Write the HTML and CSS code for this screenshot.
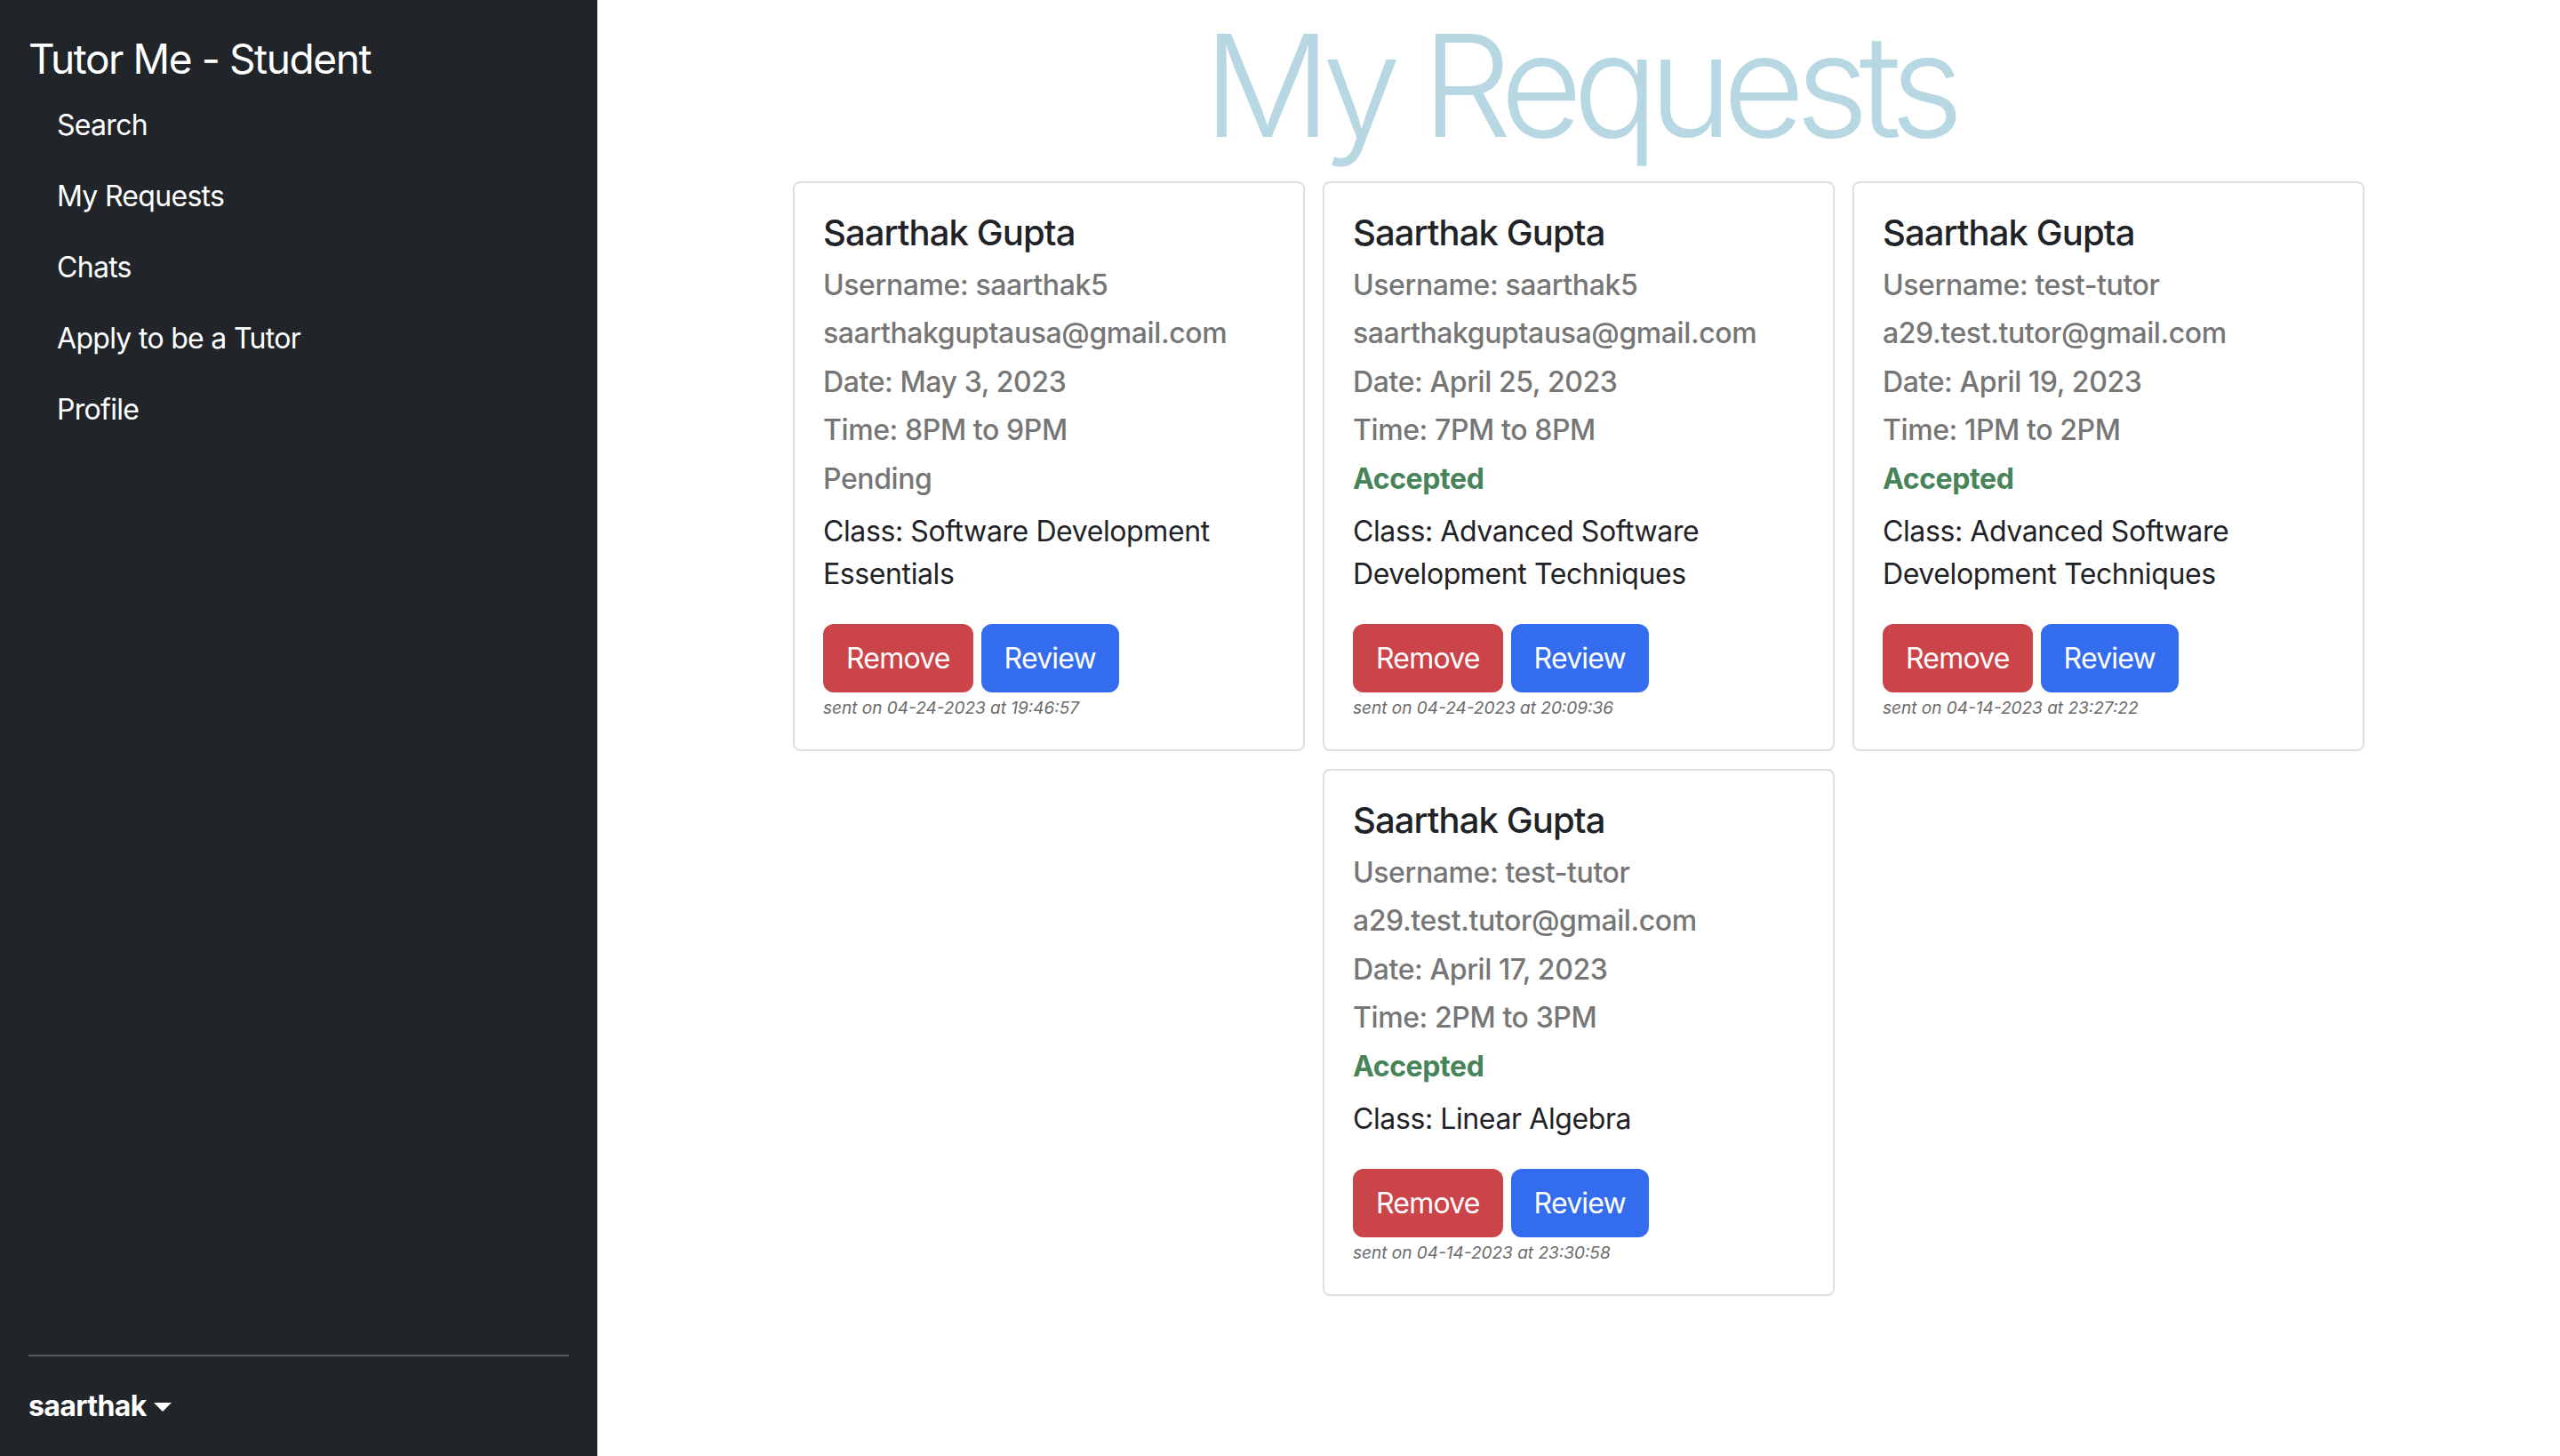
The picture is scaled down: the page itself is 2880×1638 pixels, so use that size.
FILE: index.html
```html
<!DOCTYPE html>
<html lang="en">
<head>
<meta charset="utf-8">
<title>Tutor Me - Student</title>
<link rel="stylesheet" href="styles.css">
</head>
<body>
<aside class="sidebar">
  <div class="brand">Tutor Me - Student</div>
  <ul class="nav">
    <li><a class="nav-link" href="#">Search</a></li>
    <li><a class="nav-link" href="#">My Requests</a></li>
    <li><a class="nav-link" href="#">Chats</a></li>
    <li><a class="nav-link" href="#">Apply to be a Tutor</a></li>
    <li><a class="nav-link" href="#">Profile</a></li>
  </ul>
  <hr class="divider">
  <div class="user"><strong>saarthak</strong><span class="caret"></span></div>
</aside>
<main class="main">
  <h1 class="title">My Requests</h1>
  <div class="grid">
    <div class="col">
      <div class="card">
        <h5 class="name">Saarthak Gupta</h5>
        <h6 class="sub">Username: saarthak5</h6>
        <h6 class="sub">saarthakguptausa@gmail.com</h6>
        <h6 class="sub">Date: May 3, 2023</h6>
        <h6 class="sub">Time: 8PM to 9PM</h6>
        <h6 class="sub">Pending</h6>
        <p class="klass">Class: Software Development Essentials</p>
        <div class="actions"><button class="btn btn-danger">Remove</button><button class="btn btn-primary">Review</button></div>
        <div class="sent">sent on 04-24-2023 at 19:46:57</div>
      </div>
    </div>
    <div class="col">
      <div class="card">
        <h5 class="name">Saarthak Gupta</h5>
        <h6 class="sub">Username: saarthak5</h6>
        <h6 class="sub">saarthakguptausa@gmail.com</h6>
        <h6 class="sub">Date: April 25, 2023</h6>
        <h6 class="sub">Time: 7PM to 8PM</h6>
        <h6 class="sub accepted">Accepted</h6>
        <p class="klass">Class: Advanced Software Development Techniques</p>
        <div class="actions"><button class="btn btn-danger">Remove</button><button class="btn btn-primary">Review</button></div>
        <div class="sent">sent on 04-24-2023 at 20:09:36</div>
      </div>
    </div>
    <div class="col">
      <div class="card">
        <h5 class="name">Saarthak Gupta</h5>
        <h6 class="sub">Username: test-tutor</h6>
        <h6 class="sub">a29.test.tutor@gmail.com</h6>
        <h6 class="sub">Date: April 19, 2023</h6>
        <h6 class="sub">Time: 1PM to 2PM</h6>
        <h6 class="sub accepted">Accepted</h6>
        <p class="klass">Class: Advanced Software Development Techniques</p>
        <div class="actions"><button class="btn btn-danger">Remove</button><button class="btn btn-primary">Review</button></div>
        <div class="sent">sent on 04-14-2023 at 23:27:22</div>
      </div>
    </div>
    <div class="col">
      <div class="card">
        <h5 class="name">Saarthak Gupta</h5>
        <h6 class="sub">Username: test-tutor</h6>
        <h6 class="sub">a29.test.tutor@gmail.com</h6>
        <h6 class="sub">Date: April 17, 2023</h6>
        <h6 class="sub">Time: 2PM to 3PM</h6>
        <h6 class="sub accepted">Accepted</h6>
        <p class="klass">Class: Linear Algebra</p>
        <div class="actions"><button class="btn btn-danger">Remove</button><button class="btn btn-primary">Review</button></div>
        <div class="sent">sent on 04-14-2023 at 23:30:58</div>
      </div>
    </div>
  </div>
</main>
</body>
</html>
```
FILE: styles.css
```css
* { box-sizing: border-box; }
html, body { margin: 0; padding: 0; }
body {
  display: flex;
  height: 1638px;
  overflow: hidden;
  font-family: Inter, "Noto Sans", "Liberation Sans", sans-serif;
  color: #212529;
  background: #fff;
}
.sidebar {
  width: 672px;
  flex-shrink: 0;
  background: #212529;
  color: #fff;
  display: flex;
  flex-direction: column;
  padding: 32px;
}
.brand {
  font-size: 46px;
  line-height: 58px;
  margin-top: 5px;
  margin-bottom: 6px;
  letter-spacing: -1.4px;
}
.nav { list-style: none; margin: 0; padding: 0; }
.nav-link {
  display: block;
  color: #fff;
  text-decoration: none;
  font-size: 32px;
  line-height: 48px;
  padding: 16px 32px;
  letter-spacing: -0.7px;
}
.divider {
  margin: auto 0 32px;
  border: 0;
  border-top: 2px solid rgba(255,255,255,0.25);
  height: 0;
  width: 100%;
}
.user {
  font-size: 32px;
  line-height: 48px;
  display: flex;
  align-items: center;
}
.user strong { font-weight: 700; letter-spacing: -0.6px; }
.caret {
  display: inline-block;
  margin-left: 8px;
  width: 0; height: 0;
  border-top: 10px solid #fff;
  border-left: 10px solid transparent;
  border-right: 10px solid transparent;
  margin-top: 2px;
}
.main {
  flex: 1;
  min-width: 0;
}
.title {
  margin: 0 0 12px;
  text-align: center;
  font-size: 160px;
  line-height: 192px;
  font-weight: 300;
  color: #b7d8e3;
  letter-spacing: -11px;
}
.grid {
  width: 1788px;
  margin: 0 auto;
  display: flex;
  flex-wrap: wrap;
  justify-content: center;
}
.col {
  width: 596px;
  padding: 0 10px;
  margin-bottom: 20px;
}
.card {
  border: 2px solid #dfdfdf;
  border-radius: 8px;
  padding: 32px;
}
.name {
  margin: 0 0 16px;
  font-size: 40px;
  line-height: 48px;
  font-weight: 500;
  color: #1f2226;
  letter-spacing: -0.9px;
}
.sub {
  margin: 0 0 16px;
  font-size: 32px;
  line-height: 38.4px;
  font-weight: 500;
  color: #767676;
  letter-spacing: -0.4px;
}
.sub.accepted { color: #47845a; font-weight: 700; }
.klass {
  margin: 0 0 32px;
  font-size: 32px;
  line-height: 48px;
  color: #1f2226;
  letter-spacing: -0.4px;
}
.actions { display: flex; gap: 9px; }
.btn {
  font-family: inherit;
  font-size: 32px;
  line-height: 49px;
  padding: 12px 24px;
  border: 2px solid transparent;
  border-radius: 12px;
  color: #fff;
  cursor: pointer;
  letter-spacing: -0.8px;
}
.btn-danger { background: #cb444a; }
.btn-primary { background: #346cf0; }
.sent {
  margin-top: 3px;
  font-size: 19px;
  line-height: 29px;
  font-style: italic;
  color: #6b6b6b;
  letter-spacing: 0;
}
```
